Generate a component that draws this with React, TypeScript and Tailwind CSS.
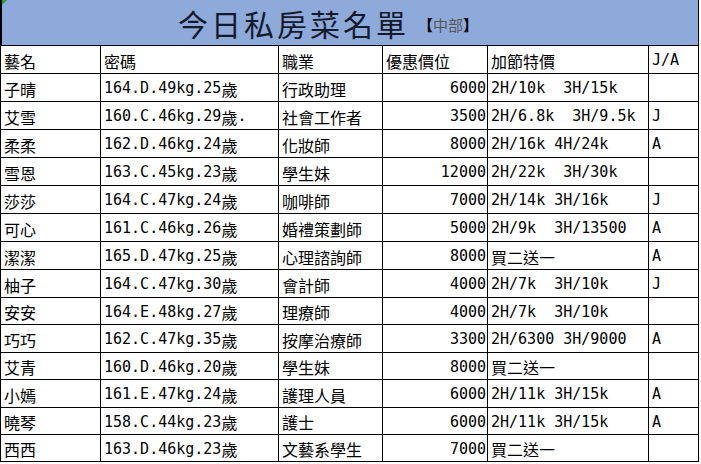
import React from 'react';

type Row = [string, string, string, string, string, string];

const rows: Row[] = [
  ['子晴', '164.D.49kg.25歲', '行政助理', '6000', '2H/10k  3H/15k', ''],
  ['艾雪', '160.C.46kg.29歲.', '社會工作者', '3500', '2H/6.8k  3H/9.5k', 'J'],
  ['柔柔', '162.D.46kg.24歲', '化妝師', '8000', '2H/16k 4H/24k', 'A'],
  ['雪恩', '163.C.45kg.23歲', '學生妹', '12000', '2H/22k  3H/30k', ''],
  ['莎莎', '164.C.47kg.24歲', '咖啡師', '7000', '2H/14k 3H/16k', 'J'],
  ['可心', '161.C.46kg.26歲', '婚禮策劃師', '5000', '2H/9k  3H/13500', 'A'],
  ['潔潔', '165.D.47kg.25歲', '心理諮詢師', '8000', '買二送一', 'A'],
  ['柚子', '164.C.47kg.30歲', '會計師', '4000', '2H/7k  3H/10k', 'J'],
  ['安安', '164.E.48kg.27歲', '理療師', '4000', '2H/7k  3H/10k', ''],
  ['巧巧', '162.C.47kg.35歲', '按摩治療師', '3300', '2H/6300 3H/9000', 'A'],
  ['艾青', '160.D.46kg.20歲', '學生妹', '8000', '買二送一', ''],
  ['小嫣', '161.E.47kg.24歲', '護理人員', '6000', '2H/11k 3H/15k', 'A'],
  ['曉琴', '158.C.44kg.23歲', '護士', '6000', '2H/11k 3H/15k', 'A'],
  ['西西', '163.D.46kg.23歲', '文藝系學生', '7000', '買二送一', ''],
];

// rows in the sheet are not all the same height
const rowH = ['h-[28px]', 'h-[28px]', 'h-[28px]', 'h-[28px]', 'h-[28px]', 'h-[28px]', 'h-[28px]', 'h-[28px]', 'h-[27px]', 'h-[28px]', 'h-[27px]', 'h-[28px]', 'h-[27px]', 'h-[27px]'];

const cjk = /([\u3000-\u9fff\uff00-\uffef]+)/;

// half-width latin in a mono face, CJK in Noto
const Txt = ({ s }: { s: string }) => (
  <>
    {s.split(cjk).filter(Boolean).map((part, i) =>
      cjk.test(part) ? (
        <span key={i} className="text-[16px] font-['Noto_Sans_CJK_TC',sans-serif]">{part}</span>
      ) : (
        <span key={i} className="whitespace-pre text-[15px] font-['DejaVu_Sans_Mono',monospace]">{part}</span>
      )
    )}
  </>
);

const cell = 'flex items-center border-r border-b border-black pt-[2px] leading-none text-black overflow-hidden whitespace-nowrap';

export default function App() {
  const header: Row = ['藝名', '密碼', '職業', '優惠價位', '加節特價', 'J/A'];
  return (
    <div className="w-[701px] h-[464px] bg-white">
      <div className="w-[699px]">
        {/* title band */}
        <div className="relative h-[46px] bg-[#8eaadb] border-l-2 border-r border-b border-black flex items-center pl-[176px]">
          <div className="absolute left-0 top-0 w-0 h-0 border-t-[5px] border-r-[5px] border-t-[#2e9a3a] border-r-transparent" />
          <span className="text-[30px] tracking-[3px] font-normal text-[#141a2c] font-['Noto_Sans_CJK_TC',sans-serif] leading-none">今日私房菜名單</span>
          <span className="ml-[9px] mt-[4px] text-[15px] leading-none font-['Noto_Sans_CJK_TC',sans-serif]">
            <span className="font-black text-black">【</span>
            <span className="text-[#555]">中部</span>
            <span className="font-black text-black">】</span>
          </span>
        </div>

        {/* sheet */}
        <div className="grid grid-cols-[100px_178px_104px_105px_161px_50px] border-l border-black">
          {header.map((h, i) => (
            <div key={i} className={`${cell} h-[28px] pl-[3px]`}>
              <Txt s={h} />
            </div>
          ))}
          {rows.map((r, ri) =>
            r.map((v, ci) => (
              <div
                key={`${ri}-${ci}`}
                className={`${cell} ${rowH[ri]} ${ci === 3 ? 'justify-end pr-[1px]' : 'pl-[3px]'}`}
              >
                <Txt s={v} />
              </div>
            ))
          )}
        </div>
      </div>
    </div>
  );
}
